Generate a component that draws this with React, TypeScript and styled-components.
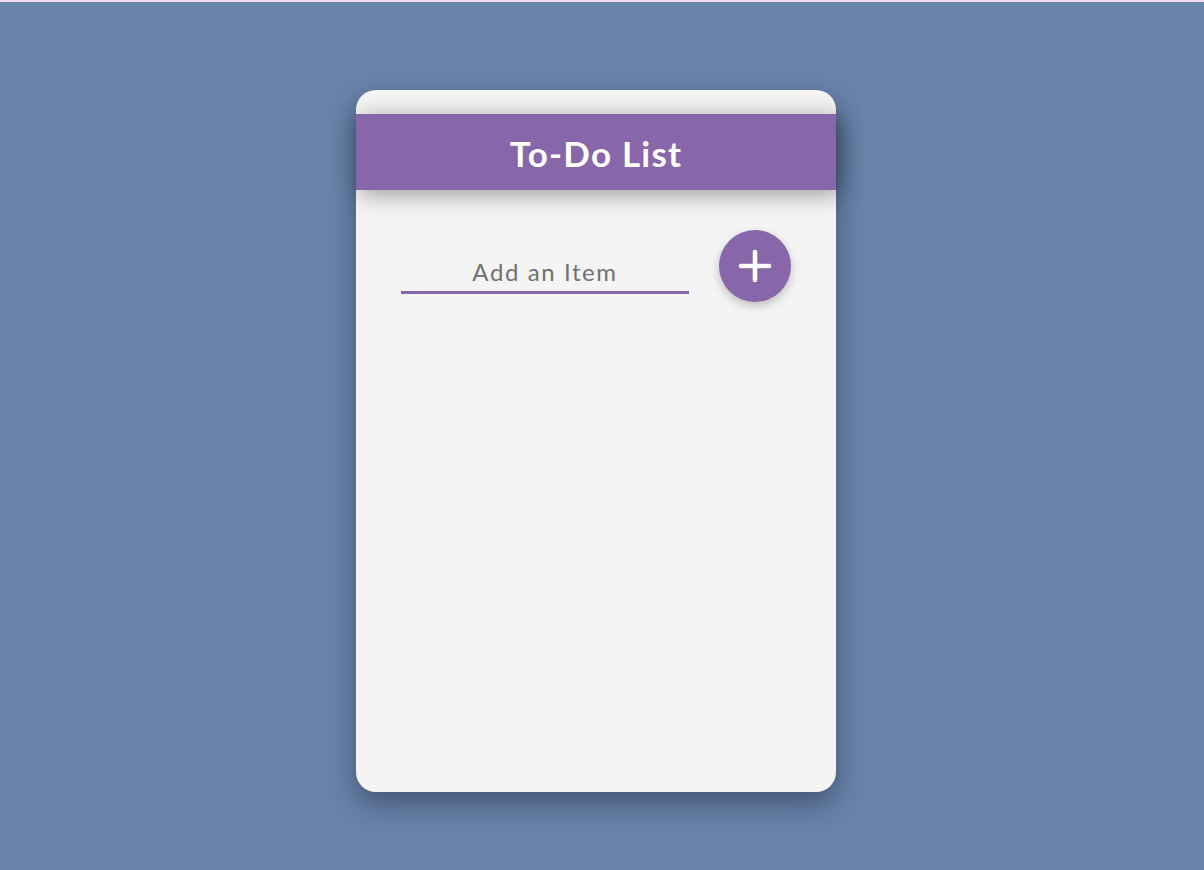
import React from "react";
import styled, { createGlobalStyle } from "styled-components";

const GlobalStyle = createGlobalStyle`
  html, body {
    margin: 0;
    padding: 0;
    background: #6983a9;
  }
  body {
    font-family: "Lato", "Open Sans", sans-serif;
    border-top: 2px solid #f1d9e7;
  }
`;

const Page = styled.div`
  display: flex;
  justify-content: center;
  padding: 88px 12px 0 0;
  min-height: 868px;
  box-sizing: border-box;
`;

const Card = styled.div`
  width: 480px;
  height: 702px;
  background: #f4f4f4;
  border-radius: 20px;
  padding-top: 24px;
  box-sizing: border-box;
  box-shadow: 0 12px 28px rgba(20, 30, 55, 0.45);
`;

const Header = styled.header`
  height: 76px;
  background: #8766a9;
  display: flex;
  align-items: center;
  justify-content: center;
  box-shadow: 4px 4px 22px rgba(0, 0, 0, 0.38);
`;

const Title = styled.h1`
  margin: 0;
  padding-top: 2px;
  color: #ffffff;
  font-size: 35px;
  font-weight: 700;
  letter-spacing: 1.2px;
`;

const Row = styled.div`
  display: flex;
  align-items: flex-start;
  gap: 30px;
  padding: 40px 45px 0;
`;

const Input = styled.input`
  width: 288px;
  height: 43px;
  margin-top: 21px;
  padding: 0;
  box-sizing: border-box;
  border: none;
  border-bottom: 3px solid #8766a9;
  background: transparent;
  text-align: center;
  font-family: inherit;
  font-size: 24px;
  letter-spacing: 1.6px;
  color: #555;
  outline: none;
  &::placeholder {
    color: #717171;
  }
`;

const AddButton = styled.button`
  width: 72px;
  height: 72px;
  border-radius: 50%;
  border: none;
  background: #8766a9;
  display: flex;
  align-items: center;
  justify-content: center;
  box-shadow: 0 4px 10px rgba(0, 0, 0, 0.22);
  cursor: pointer;
  padding: 0;
`;

const App: React.FC = () => {
  return (
    <>
      <GlobalStyle />
      <Page>
        <Card>
          <Header>
            <Title>To-Do List</Title>
          </Header>
          <Row>
            <Input placeholder="Add an Item" />
            <AddButton>
              <svg width="34" height="34" viewBox="0 0 34 34">
                <path
                  d="M17 3v28M3 17h28"
                  stroke="#fff"
                  strokeWidth="4.6"
                  strokeLinecap="round"
                />
              </svg>
            </AddButton>
          </Row>
        </Card>
      </Page>
    </>
  );
};

export default App;
